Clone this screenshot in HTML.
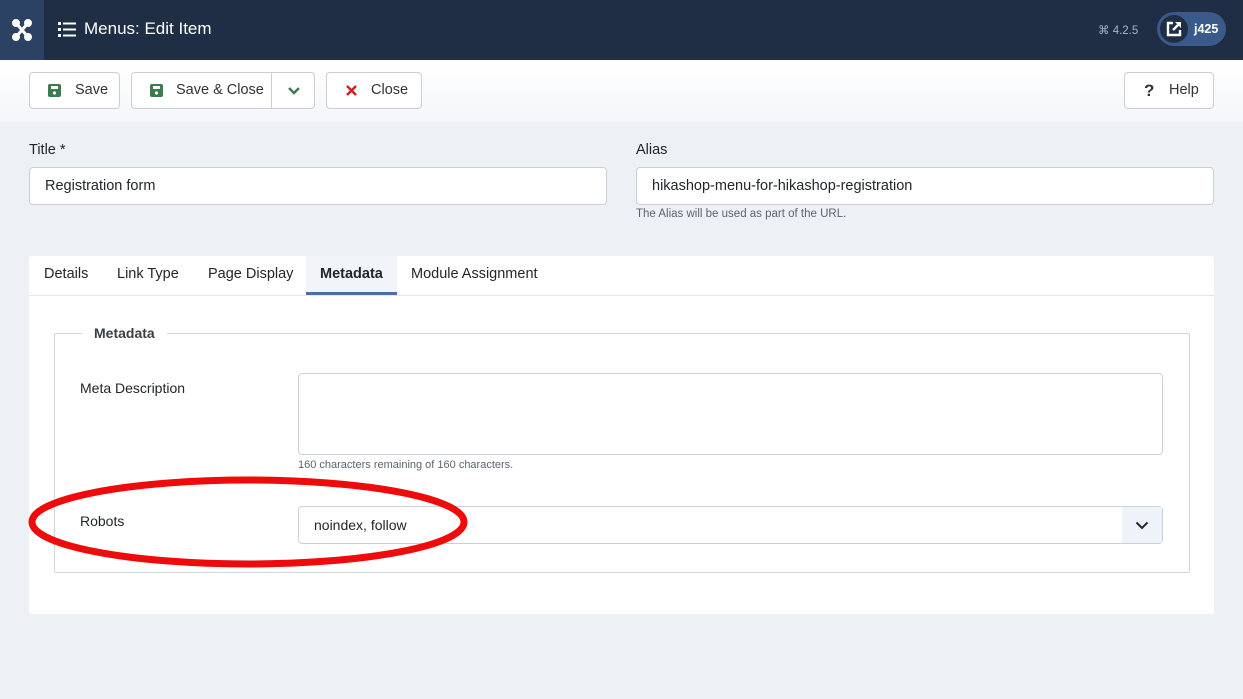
<!DOCTYPE html>
<html><head><meta charset="utf-8"><style>
*{box-sizing:border-box;margin:0;padding:0}
body{width:1243px;height:699px;overflow:hidden;background:#edf1f6;font-family:"Liberation Sans",sans-serif;color:#22262a;position:relative}
.hdr{position:absolute;left:0;top:0;width:1243px;height:60px;background:#1f2d45}
.logo{position:absolute;left:0;top:0;width:44px;height:60px;background:#2b4265}
.ttl{position:absolute;left:84px;top:19px;color:#fff;font-size:17px}
.tb{position:absolute;left:0;top:60px;width:1243px;height:62px;background:linear-gradient(#fff,#f4f6f9)}
.btn{position:absolute;top:72px;height:37px;border:1px solid #c9cfd6;border-radius:4px;background:#fff;font-size:14.5px;color:#333;line-height:35px}
.lbl{position:absolute;font-size:14.5px;color:#22262a}
.inp{position:absolute;height:38px;border:1px solid #c8d0d9;border-radius:4px;background:#fff;font-size:14.5px;line-height:36px;padding-left:15px;color:#22262a}
.card{position:absolute;left:29px;top:256px;width:1185px;height:358px;background:#fff;border-radius:3px}
.tab{position:absolute;top:266px;font-size:14.5px;color:#22262a}
</style></head><body>
<div class="hdr"></div>
<div class="logo"><svg width="44" height="60" viewBox="0 0 44 60"><g stroke="#fff" stroke-width="3" fill="none" stroke-linecap="round"><path d="M16 23l12 14M28 23L16 37"/><circle cx="16" cy="23" r="2.5" fill="#fff"/><circle cx="28" cy="23" r="2.5" fill="#fff"/><circle cx="16" cy="37" r="2.5" fill="#fff"/><circle cx="28" cy="37" r="2.5" fill="#fff"/></g></svg></div>
<svg style="position:absolute;left:58px;top:21px" width="18" height="16"><g fill="#fff"><rect x="0" y="1" width="3" height="3"/><rect x="0" y="7" width="3" height="3"/><rect x="0" y="13" width="3" height="3"/><rect x="5" y="1.5" width="13" height="2"/><rect x="5" y="7.5" width="13" height="2"/><rect x="5" y="13.5" width="13" height="2"/></g></svg>
<div class="ttl">Menus: Edit Item</div>
<div style="position:absolute;left:1098px;top:23px;font-size:11.5px;color:#aab4c2">⌘ 4.2.5</div>
<div style="position:absolute;left:1157px;top:12px;width:69px;height:34px;border-radius:17px;background:#3a5a8a"></div>
<div style="position:absolute;left:1160px;top:15px;width:28px;height:28px;border-radius:14px;background:#1f2d45"></div>
<svg style="position:absolute;left:1166px;top:21px" width="16" height="16" viewBox="0 0 16 16"><path d="M7 2H2v12h12V9" stroke="#fff" stroke-width="2.4" fill="none"/><path d="M9 1h6v6z" fill="#fff"/><path d="M14 2L7 9" stroke="#fff" stroke-width="2.4"/></svg>
<div style="position:absolute;left:1194px;top:22px;color:#fff;font-size:12.5px;font-weight:bold">j425</div>
<div class="tb"></div>
<svg width="0" height="0" style="position:absolute"><defs><symbol id="fl" viewBox="0 0 13 13"><rect width="13" height="13" rx="2" fill="#3d7a4f"/><rect x="3" y="2" width="7" height="3" fill="#fff"/><circle cx="6.5" cy="9" r="1.6" fill="#fff"/></symbol></defs></svg>
<div class="btn" style="left:29px;width:91px"><svg style="position:absolute;left:18px;top:11px" width="13" height="13"><use href="#fl"/></svg><span style="position:absolute;left:45px">Save</span></div>
<div class="btn" style="left:131px;width:184px"><svg style="position:absolute;left:18px;top:11px" width="13" height="13"><use href="#fl"/></svg><span style="position:absolute;left:44px">Save &amp; Close</span><span style="position:absolute;left:139px;top:0;height:35px;border-left:1px solid #c9cfd6"></span><svg style="position:absolute;left:155px;top:13px" width="14" height="10"><path d="M2 2l5 5 5-5" stroke="#3d7a4f" stroke-width="2.4" fill="none"/></svg></div>
<div class="btn" style="left:326px;width:96px"><svg style="position:absolute;left:19px;top:12px" width="11" height="11"><path d="M1 1l9 9M10 1l-9 9" stroke="#c52827" stroke-width="2.6"/></svg><span style="position:absolute;left:44px">Close</span></div>
<div class="btn" style="left:1124px;width:90px"><span style="position:absolute;left:19px;font-weight:bold;font-size:17px">?</span><span style="position:absolute;left:44px">Help</span></div>
<div class="lbl" style="left:29px;top:142px">Title *</div>
<div class="inp" style="left:29px;top:167px;width:578px">Registration form</div>
<div class="lbl" style="left:636px;top:142px">Alias</div>
<div class="inp" style="left:636px;top:167px;width:578px">hikashop-menu-for-hikashop-registration</div>
<div style="position:absolute;left:636px;top:208px;font-size:11.5px;color:#5a6470">The Alias will be used as part of the URL.</div>
<div class="card"></div>
<div style="position:absolute;left:29px;top:295px;width:1185px;border-top:1px solid #e3e7ec"></div>
<div style="position:absolute;left:306px;top:256px;width:91px;height:39px;background:#f1f4f8;border-bottom:3px solid #4a6fa0"></div>
<div class="tab" style="left:44px">Details</div>
<div class="tab" style="left:117px">Link Type</div>
<div class="tab" style="left:208px">Page Display</div>
<div class="tab" style="left:320px;font-weight:bold">Metadata</div>
<div class="tab" style="left:411px">Module Assignment</div>
<div style="position:absolute;left:54px;top:333px;width:1136px;height:240px;border:1px solid #cfd6de;border-radius:2px"></div>
<div style="position:absolute;left:82px;top:325px;background:#fff;padding:0 12px;font-size:14px;font-weight:bold;color:#3b4046">Metadata</div>
<div class="lbl" style="left:80px;top:380px;font-size:14px">Meta Description</div>
<div style="position:absolute;left:298px;top:373px;width:865px;height:82px;border:1px solid #c8d0d9;border-radius:4px"></div>
<div style="position:absolute;left:298px;top:459px;font-size:11px;color:#5a6470">160 characters remaining of 160 characters.</div>
<div class="lbl" style="left:80px;top:513px;font-size:14px">Robots</div>
<div class="inp" style="left:298px;top:506px;width:865px;font-size:14px">noindex, follow<span style="position:absolute;right:0;top:0;width:40px;height:36px;background:#eef3fa"><svg style="position:absolute;left:13px;top:14px" width="14" height="9"><path d="M1.5 1.5l5.5 5.5 5.5-5.5" stroke="#22262a" stroke-width="2" fill="none"/></svg></span></div>
<svg style="position:absolute;left:0;top:0" width="1243" height="699"><ellipse cx="248" cy="522" rx="216" ry="42" fill="none" stroke="#ee0b0b" stroke-width="7"/></svg>
</body></html>
